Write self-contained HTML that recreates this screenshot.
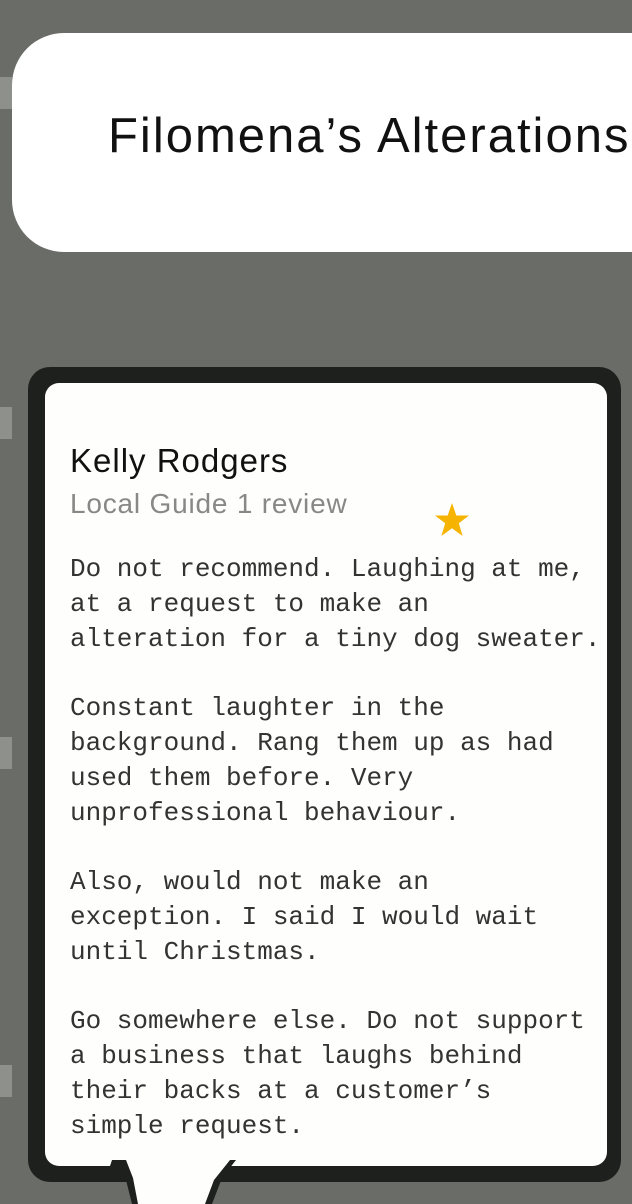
<!DOCTYPE html>
<html><head><meta charset="utf-8"><style>
html,body{margin:0;padding:0}
body{width:632px;height:1204px;background:#6a6c67;position:relative;overflow:hidden;font-family:"Liberation Sans",sans-serif}
.stripe{position:absolute;left:0;width:12px;height:32px;background:#8e908b}
.hdr{position:absolute;left:12px;top:33px;width:700px;height:219px;background:#fff;border-radius:52px}
.title{position:absolute;left:108px;top:108px;font-size:49px;color:#111;white-space:nowrap;letter-spacing:2px}
.outer{position:absolute;left:28px;top:367px;width:593px;height:815px;background:#1e201d;border-radius:22px}
.inner{position:absolute;left:45px;top:383px;width:562px;height:783px;background:#fefefc;border-radius:14px}
.name{position:absolute;left:70px;top:442px;font-size:33px;color:#111;white-space:nowrap;letter-spacing:1px}
.sub{position:absolute;left:70px;top:488px;font-size:28px;color:#888;white-space:nowrap;letter-spacing:0.8px}
.body{position:absolute;left:70px;top:552px;font-family:"Liberation Mono",monospace;font-size:26px;line-height:34.8px;color:#333;white-space:pre;margin:0}
</style></head><body>
<div class="stripe" style="top:77px"></div>
<div class="stripe" style="top:407px"></div>
<div class="stripe" style="top:737px"></div>
<div class="stripe" style="top:1065px"></div>
<div class="hdr"></div>
<div class="title">Filomena’s Alterations</div>
<div class="outer"></div>
<div class="inner"></div>
<svg style="position:absolute;left:0;top:0" width="632" height="1204">
<path d="M108 1172 L112 1160 L236 1160 L222 1178 L212 1204 L132 1204 L126 1180 Z" fill="#1e201d"/>
<path d="M117 1160 L230 1160 L214 1180 L205 1204 L138 1204 L133 1178 L126 1160 Z" fill="#fefefc"/>
<path d="M452 503 L456.3 515.5 L469 515.5 L458.8 523.2 L462.6 536 L452 528.2 L441.4 536 L445.2 523.2 L435 515.5 L447.7 515.5 Z" fill="#f6b400"/>
</svg>
<div class="name">Kelly Rodgers</div>
<div class="sub">Local Guide 1 review</div>
<pre class="body">Do not recommend. Laughing at me,
at a request to make an
alteration for a tiny dog sweater.

Constant laughter in the
background. Rang them up as had
used them before. Very
unprofessional behaviour.

Also, would not make an
exception. I said I would wait
until Christmas.

Go somewhere else. Do not support
a business that laughs behind
their backs at a customer’s
simple request.</pre>
</body></html>
